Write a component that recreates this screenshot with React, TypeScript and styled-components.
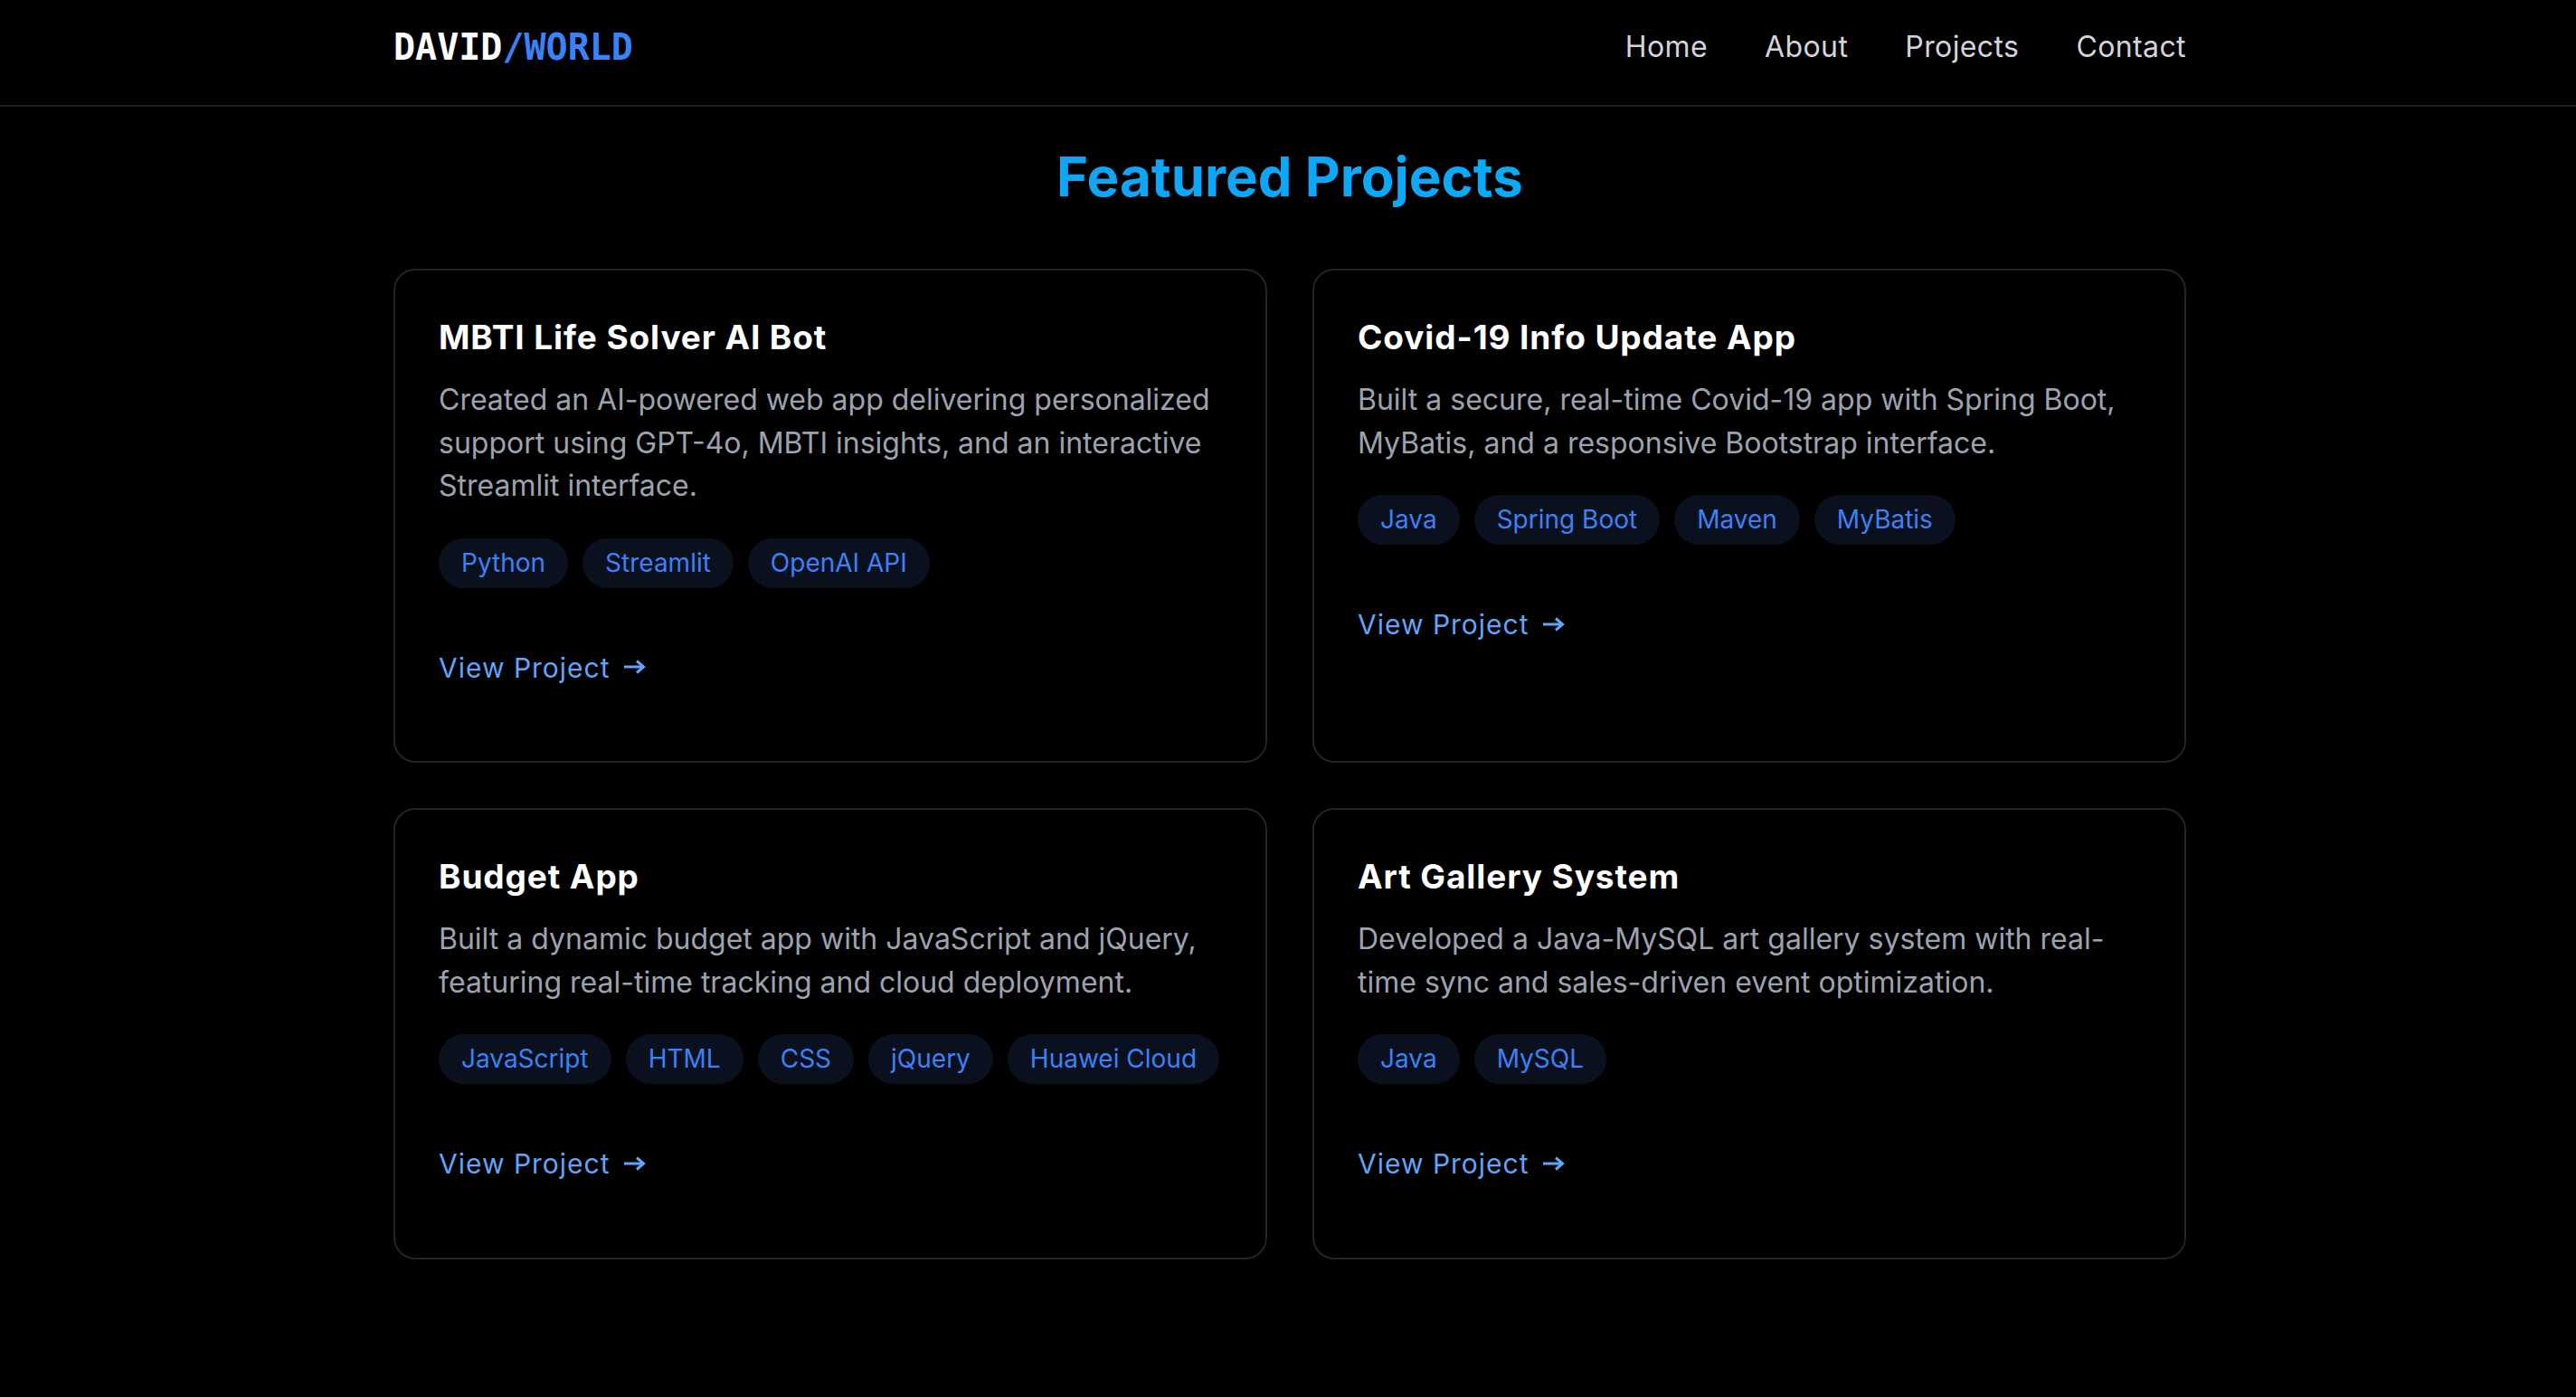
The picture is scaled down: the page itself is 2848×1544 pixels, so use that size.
import React from "react";
import styled, { createGlobalStyle } from "styled-components";

const GlobalStyle = createGlobalStyle`
  html, body {
    margin: 0;
    padding: 0;
    background: #000;
  }
  body {
    font-family: Inter, "Noto Sans", "Liberation Sans", sans-serif;
    color: #fff;
    -webkit-font-smoothing: antialiased;
  }
  * { box-sizing: border-box; }
`;

const Page = styled.div`
  min-height: 1544px;
  background: #000;
`;

const Header = styled.header`
  border-bottom: 2px solid #1f1f1f;
`;

const Container = styled.div`
  width: 1986px;
  margin: 0 auto;
  padding-left: 4px;
`;

const HeaderInner = styled(Container)`
  padding-top: 28px;
  padding-bottom: 40px;
  display: flex;
  align-items: center;
  justify-content: space-between;
`;

const Logo = styled.a`
  font-family: "DejaVu Sans Mono", "Liberation Mono", monospace;
  font-weight: 700;
  font-size: 40px;
  line-height: 48px;
  letter-spacing: 0;
  color: #fff;
  text-decoration: none;
`;

const LogoAccent = styled.span`
  color: #3b82f6;
`;

const Nav = styled.nav`
  display: flex;
  align-items: center;
  gap: 63px;
`;

const NavLink = styled.a`
  font-size: 32px;
  line-height: 48px;
  letter-spacing: 0.4px;
  color: #d1d5db;
  text-decoration: none;
`;

const Main = styled(Container)`
  padding-top: 41px;
  padding-bottom: 120px;
`;

const Title = styled.h2`
  margin: 0 0 66px;
  text-align: center;
  font-size: 60px;
  line-height: 72px;
  font-weight: 700;
  background: linear-gradient(90deg, #1a9cf7, #00b3f7);
  -webkit-background-clip: text;
  background-clip: text;
  color: transparent;
`;

const Grid = styled.div`
  display: grid;
  grid-template-columns: 1fr 1fr;
  gap: 50px;
`;

const Card = styled.article`
  border: 2px solid #242424;
  border-radius: 24px;
  background: #000;
  padding: 48px 48px 81px;
`;

const CardTitle = styled.h3`
  margin: 0;
  font-size: 37px;
  line-height: 52px;
  font-weight: 700;
  letter-spacing: 0.9px;
  color: #fff;
`;

const Description = styled.p`
  margin: 19px 0 0;
  font-size: 32px;
  line-height: 47.5px;
  color: #9ca3af;
`;

const Tags = styled.div`
  margin-top: 34px;
  display: flex;
  flex-wrap: wrap;
  gap: 16px;
`;

const Tag = styled.span`
  display: inline-flex;
  align-items: center;
  height: 55px;
  padding: 0 25px;
  border-radius: 999px;
  background: #0a101d;
  color: #3b82f6;
  font-size: 28px;
  line-height: 43px;
`;

const ViewLink = styled.a`
  display: inline-flex;
  align-items: center;
  gap: 14px;
  margin-top: 67px;
  font-size: 30px;
  line-height: 43.5px;
  letter-spacing: 1px;
  color: #60a5fa;
  text-decoration: none;
`;

const ArrowIcon = styled.svg`
  width: 25px;
  height: 18px;
  flex: none;
  margin-top: -2px;
`;

type Project = {
  title: string;
  description: string;
  tags: string[];
};

const projects: Project[] = [
  {
    title: "MBTI Life Solver AI Bot",
    description:
      "Created an AI-powered web app delivering personalized support using GPT-4o, MBTI insights, and an interactive Streamlit interface.",
    tags: ["Python", "Streamlit", "OpenAI API"],
  },
  {
    title: "Covid-19 Info Update App",
    description:
      "Built a secure, real-time Covid-19 app with Spring Boot, MyBatis, and a responsive Bootstrap interface.",
    tags: ["Java", "Spring Boot", "Maven", "MyBatis"],
  },
  {
    title: "Budget App",
    description:
      "Built a dynamic budget app with JavaScript and jQuery, featuring real-time tracking and cloud deployment.",
    tags: ["JavaScript", "HTML", "CSS", "jQuery", "Huawei Cloud"],
  },
  {
    title: "Art Gallery System",
    description:
      "Developed a Java-MySQL art gallery system with real-time sync and sales-driven event optimization.",
    tags: ["Java", "MySQL"],
  },
];

const Arrow = () => (
  <ArrowIcon viewBox="0 0 25 18" fill="none" aria-hidden="true">
    <path d="M1 9H22" stroke="currentColor" strokeWidth="3" />
    <path
      d="M15 2.5L22.5 9L15 15.5"
      stroke="currentColor"
      strokeWidth="3"
      strokeLinejoin="miter"
    />
  </ArrowIcon>
);

export default function App() {
  return (
    <Page>
      <GlobalStyle />
      <Header>
        <HeaderInner>
          <Logo href="#">
            DAVID<LogoAccent>/WORLD</LogoAccent>
          </Logo>
          <Nav>
            <NavLink href="#">Home</NavLink>
            <NavLink href="#">About</NavLink>
            <NavLink href="#">Projects</NavLink>
            <NavLink href="#">Contact</NavLink>
          </Nav>
        </HeaderInner>
      </Header>
      <Main>
        <Title>Featured Projects</Title>
        <Grid>
          {projects.map((p) => (
            <Card key={p.title}>
              <CardTitle>{p.title}</CardTitle>
              <Description>{p.description}</Description>
              <Tags>
                {p.tags.map((t) => (
                  <Tag key={t}>{t}</Tag>
                ))}
              </Tags>
              <div>
                <ViewLink href="#">
                  View Project
                  <Arrow />
                </ViewLink>
              </div>
            </Card>
          ))}
        </Grid>
      </Main>
    </Page>
  );
}
